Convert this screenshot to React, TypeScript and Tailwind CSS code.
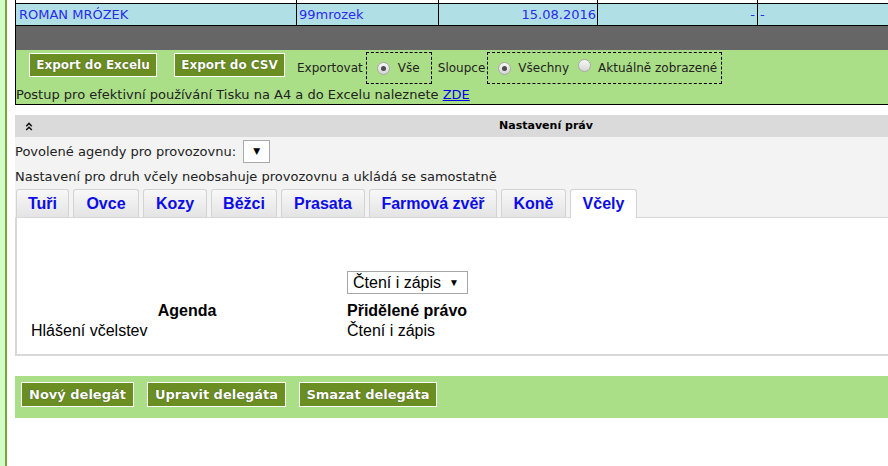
import React from "react";

const V = "font-['DejaVu_Sans',Verdana,sans-serif]";
const A = "font-['Liberation_Sans',Arial,sans-serif]";

function Radio({ checked }: { checked?: boolean }) {
  return (
    <span className="inline-flex w-[13px] h-[13px] shrink-0 rounded-full border border-[#a9a9a9] bg-linear-to-b from-[#f7f7f7] to-[#d6d6d6] items-center justify-center">
      {checked && <span className="w-[5px] h-[5px] rounded-full bg-[#4d4d4d]" />}
    </span>
  );
}

function GreenBtn({ label, w, h, size }: { label: string; w: string; h: string; size: string }) {
  return (
    <button
      className={`${w} ${h} ${size} ${V} shrink-0 flex items-center justify-center border border-white bg-[#6b8e23] text-white font-bold [text-shadow:0_0_1px_#2a3a0a]`}
    >
      {label}
    </button>
  );
}

const tabs: { label: string; w: string; active?: boolean }[] = [
  { label: "Tuři", w: "w-[53px]" },
  { label: "Ovce", w: "w-[66px]" },
  { label: "Kozy", w: "w-[64px]" },
  { label: "Běžci", w: "w-[66px]" },
  { label: "Prasata", w: "w-[84px]" },
  { label: "Farmová zvěř", w: "w-[128px]" },
  { label: "Koně", w: "w-[65px]" },
  { label: "Včely", w: "w-[67px]", active: true },
];

export default function App() {
  return (
    <div className="w-[888px] h-[466px] overflow-hidden flex bg-white text-[#222]">
      <div className="w-[5px] shrink-0 bg-[#d2fbc6]" />
      <div className="w-[2px] shrink-0 bg-[#78a53e]" />
      <div className="pl-[8px] shrink-0 w-[1070px]">
        {/* table */}
        <div className={`border-l border-black ${V}`}>
          <div className="flex h-[4px] border-b border-black">
            <div className="w-[281px] border-r border-black" />
            <div className="w-[142px] border-r border-black" />
            <div className="w-[159px] border-r border-black" />
            <div className="w-[160px] border-r border-black" />
            <div className="flex-1" />
          </div>
          <div className="flex h-[22px] border-b border-black bg-[#b0e0e6] text-[13px] leading-[21px] text-[#2a2aee]">
            <div className="w-[281px] border-r border-black pl-[3px]">ROMAN MRÓZEK</div>
            <div className="w-[142px] border-r border-black pl-[2px]">99mrozek</div>
            <div className="w-[159px] border-r border-black pr-[1px] text-right">15.08.2016</div>
            <div className="w-[160px] border-r border-black pr-[2px] text-right">-</div>
            <div className="flex-1 pl-[2px]">-</div>
          </div>
          <div className="h-[24px] bg-[#666666]" />
          <div className="h-[55px] border-b border-black bg-[#abdf87] pt-[2px]">
            <div className="flex items-start h-[32px] pl-[13px] text-[12px]">
              <div className="mt-[1px]">
                <GreenBtn label="Export do Excelu" w="w-[128px]" h="h-[24px]" size="text-[12px]" />
              </div>
              <div className="mt-[1px] ml-[17px]">
                <GreenBtn label="Export do CSV" w="w-[111px]" h="h-[24px]" size="text-[12px]" />
              </div>
              <div className="h-[32px] flex items-center ml-[12px]">Exportovat</div>
              <div className="h-[32px] w-[66px] ml-[3px] border border-dashed border-black flex items-center pl-[10px]">
                <Radio checked />
                <span className="ml-[8px]">Vše</span>
              </div>
              <div className="h-[32px] flex items-center ml-[6px]">Sloupce</div>
              <div className="h-[32px] w-[235px] ml-[2px] border border-dashed border-black flex items-center pl-[10px]">
                <Radio checked />
                <span className="ml-[7px]">Všechny</span>
                <span className="ml-[9px]">
                  <Radio />
                </span>
                <span className="ml-[7px]">Aktuálně zobrazené</span>
              </div>
            </div>
            <div className="mt-[2px] text-[13px] leading-[18px]">
              Postup pro efektivní používání Tisku na A4 a do Excelu naleznete{" "}
              <a className="text-[#0000ee] underline" href="#">ZDE</a>
            </div>
          </div>
        </div>

        {/* panel */}
        <div className="mt-[10px]">
          <div className={`relative h-[22px] bg-[#dadada] flex items-center justify-center ${V} text-[11px] font-bold text-black`}>
            <svg className="absolute left-[10px] top-[7px]" width="8" height="9" viewBox="0 0 8 9">
              <path d="M1.2 4.2 L4 1.4 L6.8 4.2 M1.2 8 L4 5.2 L6.8 8" stroke="#111" strokeWidth="1.5" fill="none" />
            </svg>
            Nastavení práv
          </div>
          <div className={`bg-[#f3f3f3] pt-[3px] ${V} text-[13px]`}>
            <div className="flex items-center h-[23px]">
              <span>Povolené agendy pro provozovnu:</span>
              <span className="ml-[7px] w-[27px] h-[23px] bg-white border border-[#a9a9a9] flex items-center justify-center text-[9px] text-black">
                ▼
              </span>
            </div>
            <div className="mt-[5px] leading-[18px]">
              Nastavení pro druh včely neobsahuje provozovnu a ukládá se samostatně
            </div>
            <div className={`mt-[3px] flex items-start h-[28px] pl-[1px] gap-[4px] ${A}`}>
              {tabs.map((t) =>
                t.active ? (
                  <div
                    key={t.label}
                    className={`${t.w} h-[29px] relative z-10 border border-b-0 border-[#d3d3d3] rounded-t-[3px] bg-white flex items-center justify-center pb-[1px] text-[16px] font-bold text-[#0c0ce8]`}
                  >
                    {t.label}
                  </div>
                ) : (
                  <div
                    key={t.label}
                    className={`${t.w} h-[28px] border border-b-0 border-[#d3d3d3] rounded-t-[3px] bg-linear-to-b from-[#f8f8f8] to-[#e4e4e4] flex items-center justify-center text-[16px] font-bold text-[#0c0ce8]`}
                  >
                    {t.label}
                  </div>
                )
              )}
            </div>
          </div>
          <div className={`h-[139px] bg-white border-t border-l-2 border-b-2 border-[#d8d8d8] pt-[53px] ${A} text-[16px] text-black`}>
            <div className="flex pl-[13px]">
              <div className="w-[317px]" />
              <div className="w-[121px] h-[23px] border border-[#a6a6a6] flex items-center pl-[5px]">
                <span>Čtení i zápis</span>
                <span className="ml-[8px] text-[10px]">▼</span>
              </div>
            </div>
            <div className="flex pl-[13px] mt-[7px] leading-[20px] font-bold">
              <div className="w-[314px] text-center">Agenda</div>
              <div className="ml-[3px]">Přidělené právo</div>
            </div>
            <div className="flex pl-[13px] leading-[20px]">
              <div className="w-[317px] pl-[1px]">Hlášení včelstev</div>
              <div>Čtení i zápis</div>
            </div>
          </div>
        </div>

        {/* bottom bar */}
        <div className="mt-[20px] h-[42px] bg-[#abdf87] pt-[6px] pl-[6px] flex items-start gap-[13px]">
          <GreenBtn label="Nový delegát" w="w-[113px]" h="h-[25px]" size="text-[13px]" />
          <GreenBtn label="Upravit delegáta" w="w-[139px]" h="h-[25px]" size="text-[13px]" />
          <GreenBtn label="Smazat delegáta" w="w-[138px]" h="h-[25px]" size="text-[13px]" />
        </div>
      </div>
    </div>
  );
}
